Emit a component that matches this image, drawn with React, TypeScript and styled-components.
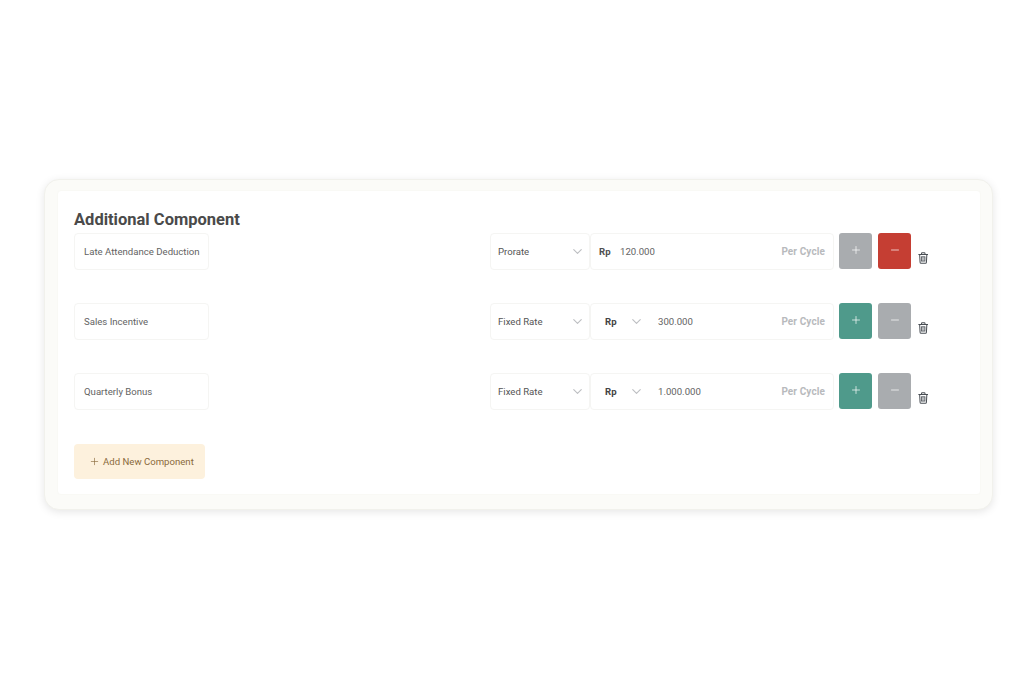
import React from 'react';
import styled, { createGlobalStyle } from 'styled-components';
import { ChevronDown, Plus, Minus } from 'lucide-react';

const GlobalStyle = createGlobalStyle`
  html, body {
    margin: 0;
    padding: 0;
    background: #ffffff;
    font-family: Roboto, "Liberation Sans", sans-serif;
  }
  * {
    box-sizing: border-box;
  }
`;

type ComponentRow = {
  name: string;
  rateType: string;
  amount: string;
  hasCurrencySelect: boolean;
  isLate: boolean;
};

const rows: ComponentRow[] = [
  { name: 'Late Attendance Deduction', rateType: 'Prorate', amount: '120.000', hasCurrencySelect: false, isLate: true },
  { name: 'Sales Incentive', rateType: 'Fixed Rate', amount: '300.000', hasCurrencySelect: true, isLate: false },
  { name: 'Quarterly Bonus', rateType: 'Fixed Rate', amount: '1.000.000', hasCurrencySelect: true, isLate: false },
];

const TrashIcon = () => (
  <svg width="10.5" height="12" viewBox="0 0 12 14" fill="none" stroke="#4a4f55" strokeWidth="1.2">
    <path d="M0.8 3h10.4" strokeLinecap="round" />
    <path d="M4 2.8V1.6c0-.4.3-.8.8-.8h2.4c.5 0 .8.4.8.8v1.2" />
    <path d="M1.8 3l.5 8.9c0 .7.5 1.2 1.2 1.2h5c.7 0 1.2-.5 1.2-1.2l.5-8.9" />
    <rect x="4" y="5.6" width="4" height="5" fill="#b8bbbe" strokeWidth="0.9" />
  </svg>
);

const App = () => {
  return (
    <>
      <GlobalStyle />
      <Page>
        <OuterCard>
          <InnerCard>
            <Title>Additional Component</Title>
            <RowList>
              {rows.map((row) => (
                <Row key={row.name}>
                  <NameField>
                    <NameText>{row.name}</NameText>
                  </NameField>
                  <RateSelect>
                    <span>{row.rateType}</span>
                    <ChevronDown size={15} color="#bdbfc2" strokeWidth={1.8} />
                  </RateSelect>
                  <AmountField>
                    {row.hasCurrencySelect ? (
                      <CurrencySelect>
                        <Currency>Rp</Currency>
                        <ChevronDown size={15} color="#bdbfc2" strokeWidth={1.8} />
                      </CurrencySelect>
                    ) : (
                      <PlainCurrency>Rp</PlainCurrency>
                    )}
                    <Amount>{row.amount}</Amount>
                    <Cycle>Per Cycle</Cycle>
                  </AmountField>
                  <SquareButton $color={row.isLate ? '#a9acaf' : '#4f9a8b'}>
                    <Plus size={12} color="#ffffff" strokeWidth={1.4} />
                  </SquareButton>
                  <SquareButton $color={row.isLate ? '#c53e33' : '#a9acaf'}>
                    <Minus size={12} color="#ffffff" strokeWidth={1.4} />
                  </SquareButton>
                  <TrashButton>
                    <TrashIcon />
                  </TrashButton>
                </Row>
              ))}
            </RowList>
            <AddButton>
              <Plus size={11} color="#8a6a3c" strokeWidth={1.4} />
              Add New Component
            </AddButton>
          </InnerCard>
        </OuterCard>
      </Page>
    </>
  );
};

const Page = styled.div`
  width: 1036px;
  height: 690px;
  padding: 179px 43px 0 44px;
  background: #ffffff;
  overflow: hidden;
`;

const OuterCard = styled.div`
  height: 331px;
  padding: 10px 11px 14px 12px;
  background: #fbfbf8;
  border: 1px solid #f1f1ec;
  border-radius: 15px;
  box-shadow: 0 2px 8px rgba(0, 0, 0, 0.1);
`;

const InnerCard = styled.div`
  height: 100%;
  padding: 19px 16px 0 16px;
  background: #ffffff;
  border: 1px solid #f9f9f5;
  border-radius: 4px;
`;

const Title = styled.h2`
  margin: 0;
  height: 22.5px;
  font-size: 16.5px;
  line-height: 20px;
  font-weight: 700;
  color: #4a4a4a;
`;

const RowList = styled.div`
  display: flex;
  flex-direction: column;
  gap: 32.5px;
`;

const Row = styled.div`
  display: flex;
  align-items: flex-start;
  height: 37.5px;
`;

const fieldBorder = `
  background: #ffffff;
  border: 1px solid #f5f5f3;
  border-radius: 4px;
`;

const NameField = styled.div`
  ${fieldBorder}
  width: 135px;
  height: 37px;
  margin-right: 281px;
  margin-top: 0.5px;
  padding: 0 9px 1px 9px;
  display: flex;
  align-items: center;
  overflow: hidden;
`;

const NameText = styled.span`
  font-size: 9.6px;
  color: #636363;
  white-space: nowrap;
`;

const RateSelect = styled.div`
  ${fieldBorder}
  width: 100px;
  height: 37px;
  margin-top: 0.5px;
  padding: 0 4px 1px 7px;
  display: flex;
  align-items: center;
  justify-content: space-between;
  font-size: 9.6px;
  color: #555555;
`;

const AmountField = styled.div`
  ${fieldBorder}
  width: 244px;
  height: 37px;
  margin-top: 0.5px;
  padding: 0 8px 1px 8px;
  display: flex;
  align-items: center;
  font-size: 9.6px;
`;

const PlainCurrency = styled.span`
  width: 21px;
  font-weight: 700;
  color: #4f4f4f;
`;

const CurrencySelect = styled.div`
  width: 59px;
  padding-left: 6px;
  display: flex;
  align-items: center;
  gap: 12px;
`;

const Currency = styled.span`
  font-weight: 700;
  color: #444444;
`;

const Amount = styled.span`
  color: #636363;
`;

const Cycle = styled.span`
  margin-left: auto;
  font-size: 10px;
  font-weight: 700;
  color: #b8babd;
  letter-spacing: 0.01em;
`;

const SquareButton = styled.button<{ $color: string }>`
  width: 33px;
  height: 36px;
  margin-left: 5px;
  padding: 0 0 2px 0;
  border: none;
  border-radius: 3px;
  background: ${(props) => props.$color};
  display: flex;
  align-items: center;
  justify-content: center;
  & + & {
    margin-left: 6px;
  }
`;

const TrashButton = styled.div`
  width: 11px;
  margin: 19.5px 0 0 6.5px;
  display: flex;
`;

const AddButton = styled.button`
  margin-top: 34px;
  width: 131px;
  height: 35px;
  padding: 0 0 1px 15px;
  border: none;
  border-radius: 4px;
  background: #fdf1dd;
  color: #8a6a3c;
  font-family: inherit;
  font-size: 9.6px;
  display: flex;
  align-items: center;
  gap: 3px;
`;

export default App;
